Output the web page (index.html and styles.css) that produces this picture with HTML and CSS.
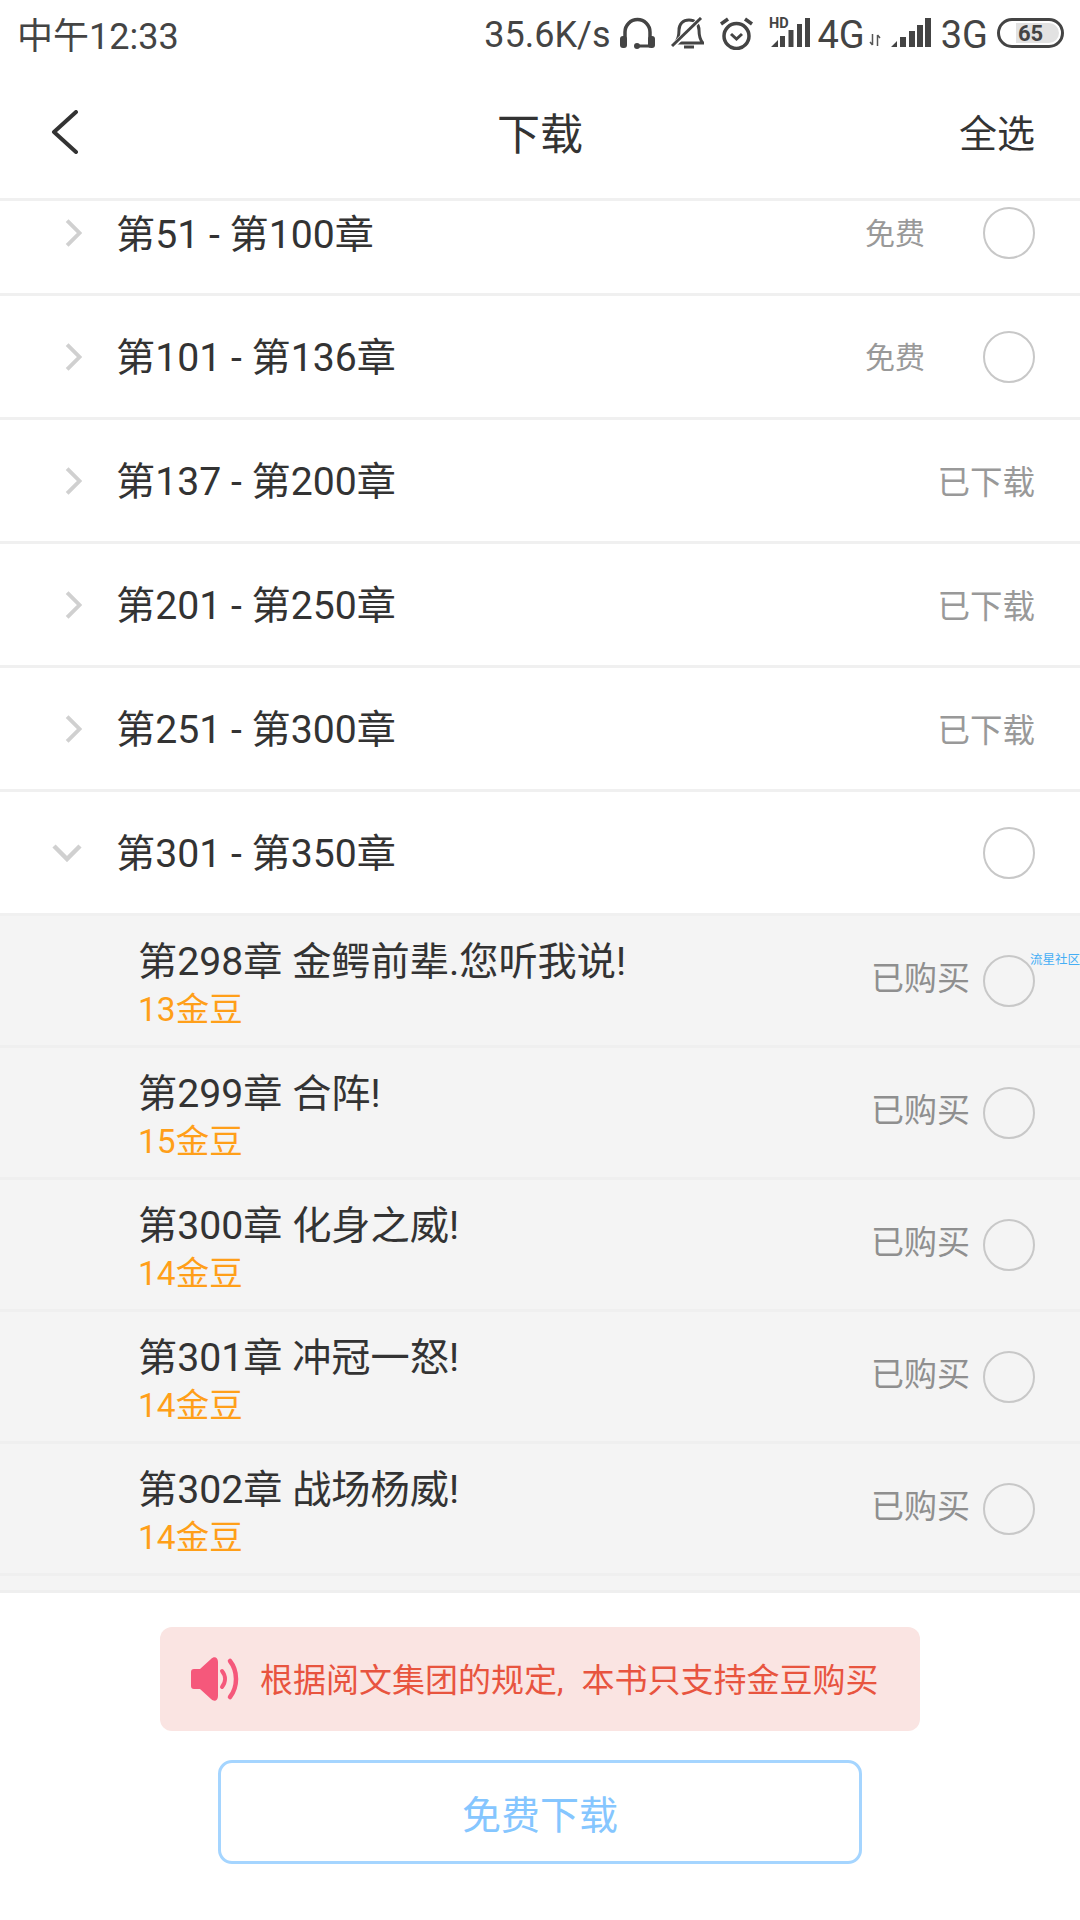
FILE: index.html
```html
<!DOCTYPE html>
<html lang="zh-CN">
<head>
<meta charset="utf-8">
<title>下载</title>
<link rel="stylesheet" href="styles.css">
</head>
<body>
<div class="page">
  <div class="status">
    <span class="time">中午12:33</span>
    <div class="status-right">
      <span class="speed">35.6K/s</span>
      <svg class="ic-head" viewBox="0 0 35 32"><path d="M5 24V15a12.500 12.500 0 0 1 25 0v9" fill="none" stroke="#444" stroke-width="3.500"/><rect x="0" y="19" width="7" height="12" rx="3" fill="#444"/><rect x="28" y="19" width="7" height="12" rx="3" fill="#444"/><path d="M17 29h13" stroke="#444" stroke-width="3"/><circle cx="17" cy="29" r="3" fill="#444"/></svg>
      <svg class="ic-bell" viewBox="0 0 33 32"><path d="M4 26h28c-3-3-4-7-4-13 0-6-4-10-10-10S8 7 8 13c0 6-1 10-4 13z" fill="none" stroke="#444" stroke-width="3"/><path d="M13 30h10" stroke="#444" stroke-width="3"/><path d="M0 31L30 1" stroke="#fff" stroke-width="5"/><path d="M1 29L30 1" stroke="#444" stroke-width="3"/></svg>
      <svg class="ic-alarm" viewBox="0 0 35 34"><circle cx="17.500" cy="20" r="12.500" fill="none" stroke="#444" stroke-width="3.500"/><path d="M12 18l5.500 5 5.500-5" fill="none" stroke="#444" stroke-width="3"/><path d="M2 8l7-5M33 8l-7-5" stroke="#444" stroke-width="3.500"/></svg>
      <svg class="ic-hd" viewBox="0 -3 41 34"><text x="0" y="11" class="hd-text">HD</text><path d="M2 30l7-7v7zM11 19h5v11h-5zM19.500 13h5v17h-5zM28 7h5v23h-5zM36 1h5v29h-5z" fill="#444"/></svg>
      <span class="net">4G</span>
      <svg class="ic-arrows" viewBox="0 0 12 12"><path d="M3.500 0v11M3.500 11L1 8M8.500 12V1M8.500 1L11 4" fill="none" stroke="#555" stroke-width="1.500"/></svg>
      <svg class="ic-signal" viewBox="0 0 41 30"><path d="M0 29l6-6v6zM9 19h6v10H9zM18 13h6v16h-6zM26 7h6v22h-6zM34 0h6v29h-6z" fill="#444"/></svg>
      <span class="net net-3g">3G</span>
      <div class="battery"><div class="battery-fill"></div><span class="battery-num">65</span></div>
    </div>
  </div>

  <header class="bar">
    <svg class="back" viewBox="0 0 28 44"><path d="M25 2L3 22l22 20" fill="none" stroke="#333" stroke-width="4" stroke-linecap="round" stroke-linejoin="round"/></svg>
    <span class="bar-title">下载</span>
    <span class="bar-action">全选</span>
  </header>

  <main class="list">
    <div class="row row-cut">
      <span class="chev"><svg class="chev-r" viewBox="0 0 20 32"><path d="M2.500 1.500L17 16 2.500 30.500" fill="none" stroke="#d0d0d0" stroke-width="4.500"/></svg></span>
      <span class="row-title">第51 - 第100章</span>
      <span class="free">免费</span><span class="radio"></span>
    </div>
    <div class="row">
      <span class="chev"><svg class="chev-r" viewBox="0 0 20 32"><path d="M2.500 1.500L17 16 2.500 30.500" fill="none" stroke="#d0d0d0" stroke-width="4.500"/></svg></span>
      <span class="row-title">第101 - 第136章</span>
      <span class="free">免费</span><span class="radio"></span>
    </div>
    <div class="row">
      <span class="chev"><svg class="chev-r" viewBox="0 0 20 32"><path d="M2.500 1.500L17 16 2.500 30.500" fill="none" stroke="#d0d0d0" stroke-width="4.500"/></svg></span>
      <span class="row-title">第137 - 第200章</span>
      <span class="done">已下载</span>
    </div>
    <div class="row">
      <span class="chev"><svg class="chev-r" viewBox="0 0 20 32"><path d="M2.500 1.500L17 16 2.500 30.500" fill="none" stroke="#d0d0d0" stroke-width="4.500"/></svg></span>
      <span class="row-title">第201 - 第250章</span>
      <span class="done">已下载</span>
    </div>
    <div class="row">
      <span class="chev"><svg class="chev-r" viewBox="0 0 20 32"><path d="M2.500 1.500L17 16 2.500 30.500" fill="none" stroke="#d0d0d0" stroke-width="4.500"/></svg></span>
      <span class="row-title">第251 - 第300章</span>
      <span class="done">已下载</span>
    </div>
    <div class="row">
      <span class="chev"><svg class="chev-d" viewBox="0 0 30 18"><path d="M2 2l13 13L28 2" fill="none" stroke="#d0d0d0" stroke-width="4.500"/></svg></span>
      <span class="row-title">第301 - 第350章</span>
      <span class="radio"></span>
    </div>

    <div class="sub">
      <div class="sub-text"><span class="sub-title">第298章 金鳄前辈.您听我说!</span><span class="price">13金豆</span></div>
      <span class="bought">已购买</span><span class="radio"></span>
      <span class="mark">流星社区</span>
    </div>
    <div class="sub">
      <div class="sub-text"><span class="sub-title">第299章 合阵!</span><span class="price">15金豆</span></div>
      <span class="bought">已购买</span><span class="radio"></span>
    </div>
    <div class="sub">
      <div class="sub-text"><span class="sub-title">第300章 化身之威!</span><span class="price">14金豆</span></div>
      <span class="bought">已购买</span><span class="radio"></span>
    </div>
    <div class="sub">
      <div class="sub-text"><span class="sub-title">第301章 冲冠一怒!</span><span class="price">14金豆</span></div>
      <span class="bought">已购买</span><span class="radio"></span>
    </div>
    <div class="sub">
      <div class="sub-text"><span class="sub-title">第302章 战场杨威!</span><span class="price">14金豆</span></div>
      <span class="bought">已购买</span><span class="radio"></span>
    </div>
    <div class="sub-sliver"></div>
  </main>

  <footer class="foot">
    <div class="notice">
      <svg class="speaker" viewBox="0 0 48 44"><path d="M0 15c0-2 1-3 3-3h6L20 2c3-3 7-2 7 3v34c0 5-4 6-7 3L9 32H3c-2 0-3-1-3-3z" fill="#f5587b"/><path d="M31 14c4 5 4 11 0 16" fill="none" stroke="#f5587b" stroke-width="4" stroke-linecap="round"/><path d="M39 4c8 10 8 26 0 36" fill="none" stroke="#f5587b" stroke-width="4.500" stroke-linecap="round"/></svg>
      <span class="notice-text"><span class="notice-part">根据阅文集团的规定,</span>本书只支持金豆购买</span>
    </div>
    <button class="dl">免费下载</button>
  </footer>
</div>
</body>
</html>
```

FILE: styles.css
```css
* { box-sizing: border-box; }
html, body { margin: 0; padding: 0; }
body {
  width: 1080px;
  height: 1920px;
  overflow: hidden;
  background: #fff;
  color: #333;
  font-family: Roboto, "Noto Sans CJK SC", sans-serif;
}
.page { display: flex; flex-direction: column; height: 1920px; }

.status {
  height: 70px;
  display: flex;
  align-items: center;
  justify-content: space-between;
  padding: 0 16px 0 17px;
  color: #444;
  font-size: 36px;
}
.time { margin-bottom: 4px; }
.status-right { display: flex; align-items: center; }
.status-right svg { margin-bottom: 5px; }
.speed { margin-right: 9px; }
.ic-head { width: 35px; height: 32px; margin-right: 16px; }
.ic-bell { width: 33px; height: 32px; margin-right: 15px; }
.ic-alarm { width: 35px; height: 34px; margin-right: 15px; }
.status-right .ic-hd { width: 41px; height: 34px; margin: 0 8px 8px 0; }
.hd-text { font: bold 14.500px Roboto, sans-serif; fill: #444; }
.net { font-size: 38px; }
.status-right .ic-arrows { width: 12px; height: 12px; margin: 9px 10px 0 4px; }
.ic-signal { width: 41px; height: 30px; margin-right: 9px; }
.net-3g { margin-right: 9px; }
.battery {
  position: relative;
  width: 67px;
  height: 30px;
  margin-bottom: 4px;
  border: 3.500px solid #444;
  border-radius: 15px;
  display: flex;
  align-items: center;
  justify-content: center;
  overflow: hidden;
}
.battery-fill { position: absolute; left: 16px; top: 2px; bottom: 2px; right: 2px; background: #e2e2e2; border-radius: 0 10px 10px 0; }
.battery-num { position: relative; font-size: 22px; font-weight: 700; }

.bar {
  height: 131px;
  display: grid;
  grid-template-columns: 1fr auto 1fr;
  align-items: center;
  padding: 0 45px;
  border-bottom: 3px solid #f0f0f0;
}
.back { width: 28px; height: 44px; margin: 0 0 4px 6px; }
.bar-title { font-size: 43px; line-height: 1; margin-top: 2px; }
.bar-action { font-size: 38px; line-height: 1; justify-self: end; }

.list { display: flex; flex-direction: column; }
.row {
  height: 124px;
  flex: none;
  display: flex;
  align-items: center;
  padding: 0 45px 0 52px;
  background: #fff;
  border-bottom: 3px solid #f0f0f0;
}
.row-cut { height: 95px; padding-bottom: 28px; }
.chev { width: 30px; margin-right: 34px; display: flex; justify-content: center; }
.chev-r { width: 20px; height: 32px; margin-left: 13px; }
.chev-d { width: 30px; height: 18px; }
.row-title { font-size: 39.200px; flex: 1; margin-bottom: 5px; }
.free { font-size: 30px; color: #999; margin: 0 58px 4px 0; }
.done { font-size: 32.500px; color: #999; margin-bottom: 3px; }
.radio {
  width: 52px;
  height: 52px;
  flex: none;
  border: 2px solid #c8c8c8;
  border-radius: 50%;
}

.sub {
  position: relative;
  height: 132px;
  flex: none;
  display: flex;
  align-items: center;
  padding: 0 45px 0 138px;
  background: #f4f4f4;
  border-bottom: 3px solid #efefef;
}
.sub-text { flex: 1; align-self: stretch; display: flex; flex-direction: column; padding-top: 23px; }
.sub-title { font-size: 39.200px; line-height: 46px; }
.price { font-size: 33.500px; line-height: 50px; color: #ff9f19; }
.bought { font-size: 33px; color: #8f8f8f; margin: 0 13px 10px 0; }
.mark {
  position: absolute;
  right: 0;
  top: 37px;
  font-size: 12.500px;
  line-height: 14px;
  color: #45aef5;
}
.sub-sliver { height: 17px; flex: none; background: #f4f4f4; border-bottom: 3px solid #efefef; }

.foot {
  flex: 1;
  display: flex;
  flex-direction: column;
  align-items: center;
  padding-top: 34px;
  gap: 29px;
}
.notice {
  width: 760px;
  height: 104px;
  display: flex;
  align-items: center;
  padding-left: 31px;
  background: #fae4e2;
  border-radius: 12px;
}
.speaker { width: 48px; height: 44px; margin-right: 21px; }
.notice-text { font-size: 33px; color: #e8543f; white-space: nowrap; margin-bottom: 2px; }
.notice-part { margin-right: 18px; }
.dl {
  width: 644px;
  height: 104px;
  background: #fff;
  border: 3px solid #a5d5ff;
  border-radius: 14px;
  color: #85c6ff;
  font-family: inherit;
  font-size: 39px;
}
```
